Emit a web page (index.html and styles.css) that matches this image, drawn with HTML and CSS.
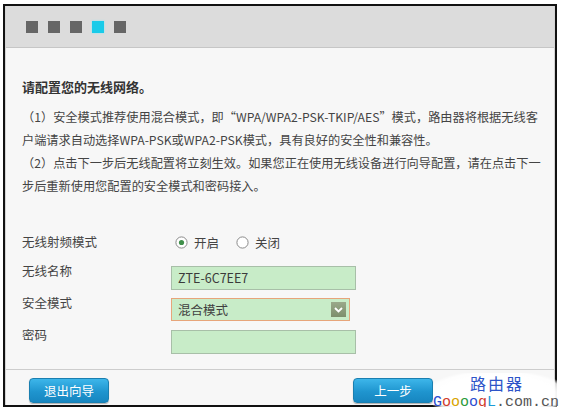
FILE: index.html
```html
<!DOCTYPE html>
<html lang="zh-CN">
<head>
<meta charset="utf-8">
<title>无线网络配置</title>
<link rel="stylesheet" href="styles.css">
</head>
<body>
<div class="frame">
  <div class="panel">
    <div class="steps">
      <span class="step"></span>
      <span class="step"></span>
      <span class="step"></span>
      <span class="step active"></span>
      <span class="step"></span>
    </div>
    <div class="content">
      <h1 class="title">请配置您的无线网络。</h1>
      <p class="desc">（1）安全模式推荐使用混合模式，即“WPA/WPA2-PSK-TKIP/AES”模式，路由器将根据无线客<br>户端请求自动选择WPA-PSK或WPA2-PSK模式，具有良好的安全性和兼容性。<br>（2）点击下一步后无线配置将立刻生效。如果您正在使用无线设备进行向导配置，请在点击下一<br>步后重新使用您配置的安全模式和密码接入。</p>
      <div class="form">
        <div class="row radio-row">
          <span class="label">无线射频模式</span>
          <div class="radios">
            <span class="radio">
              <svg width="13" height="13" viewBox="0 0 13 13"><circle cx="6.5" cy="6.5" r="5.6" fill="#fff" stroke="#8a8a8a" stroke-width="1"/><circle cx="6.5" cy="6.5" r="2.6" fill="#3f8f4a"/></svg>
              开启
            </span>
            <span class="radio">
              <svg width="13" height="13" viewBox="0 0 13 13"><circle cx="6.5" cy="6.5" r="5.6" fill="#fff" stroke="#8a8a8a" stroke-width="1"/></svg>
              关闭
            </span>
          </div>
        </div>
        <div class="row">
          <span class="label">无线名称</span>
          <div class="field">ZTE-6C7EE7</div>
        </div>
        <div class="row">
          <span class="label">安全模式</span>
          <div class="field select">混合模式
            <span class="arrow"><svg width="9" height="6" viewBox="0 0 9 6"><path d="M1 1 L4.5 4.5 L8 1" fill="none" stroke="#fff" stroke-width="1.8"/></svg></span>
          </div>
        </div>
        <div class="row">
          <span class="label">密码</span>
          <div class="field"></div>
        </div>
      </div>
    </div>
    <div class="footer">
      <button class="btn">退出向导</button>
      <button class="btn">上一步</button>
    </div>
  </div>
  <div class="watermark">
    <span class="wm-top">路由器</span>
    <span class="wm-bottom"><span class="c1">G</span><span class="c2">o</span><span class="c3">o</span><span class="c4">o</span><span class="c1">o</span><span class="c2">g</span><span class="c5">L</span><span class="c6">.com.cn</span></span>
  </div>
</div>
</body>
</html>
```
FILE: styles.css
```css
html, body {
  margin: 0;
  padding: 0;
  background: #fff;
}
body {
  font-family: "Noto Sans CJK SC", "Noto Sans", sans-serif;
  color: #3c3c3c;
}
.frame {
  position: relative;
  margin: 4px 0 0 3px;
  width: 550px;
  border: 2px solid #111;
}
.panel {
  background: #f7f7f7;
  border-left: 1px solid #d4d4d4;
  border-right: 1px solid #d4d4d4;
}
.steps {
  height: 41px;
  background: #dcdcdc;
  border-bottom: 1px solid #c6c6c6;
  display: flex;
  align-items: center;
  gap: 10px;
  padding-left: 20px;
}
.step {
  width: 12px;
  height: 12px;
  background: #666;
}
.step.active {
  background: #19cbe9;
  box-shadow: 0 0 2px #8ee9f7;
}
.content {
  height: 322px;
  padding: 0 0 0 16px;
  box-sizing: border-box;
  border-bottom: 1px solid #cdcdcd;
}
.title {
  margin: 0;
  padding-top: 30px;
  font-size: 13px;
  font-weight: bold;
  line-height: 18px;
  color: #333;
}
.desc {
  margin: 10px 0 0;
  font-size: 12.2px;
  line-height: 23px;
  color: #444;
  white-space: nowrap;
}
.form {
  margin-top: 34px;
  display: flex;
  flex-direction: column;
  gap: 8px;
}
.row {
  display: flex;
  align-items: flex-start;
  height: 24px;
  font-size: 12.5px;
}
.radio-row {
  align-items: center;
  height: 20px;
  margin-bottom: 6px;
}
.label {
  width: 149px;
  line-height: 16px;
  color: #444;
  margin-top: -3px;
}
.radio-row .label {
  margin-top: 0;
}
.radios {
  display: flex;
  gap: 17px;
  padding-left: 4px;
}
.radio {
  display: flex;
  align-items: center;
  gap: 6px;
  color: #444;
}
.field {
  width: 171px;
  height: 22px;
  background: #c8ecc8;
  border: 1px solid #a8bfa8;
  line-height: 22px;
  padding: 0 6px;
  font-size: 12.5px;
  color: #3a3a3a;
}
.field.select {
  width: 161px;
  height: 21px;
  line-height: 21px;
  border-color: #e7a57a;
  padding-right: 10px;
  color: #404040;
  display: flex;
  align-items: center;
  justify-content: space-between;
}
.arrow {
  width: 15px;
  height: 15px;
  background: linear-gradient(#9aa88a, #7d8f6c);
  display: flex;
  align-items: center;
  justify-content: center;
  margin-right: -7px;
}
.footer {
  height: 33px;
  display: flex;
  justify-content: space-between;
  align-items: flex-end;
  padding: 0 121px 2px 23px;
}
.btn {
  width: 80px;
  height: 25px;
  border: 1px solid #1a7fb0;
  border-radius: 4px;
  background: linear-gradient(#3db6ea, #1f95cf 55%, #1786c0);
  color: #fff;
  font-family: "Noto Sans CJK SC", sans-serif;
  font-size: 12.5px;
  padding: 0;
  box-shadow: 0 1px 1px rgba(0,0,0,0.3);
}
.watermark {
  position: absolute;
  right: -6px;
  bottom: -10px;
  width: 128px;
  height: 42px;
  background: radial-gradient(ellipse at 50% 50%, #fff 62%, rgba(255,255,255,0.85) 74%, rgba(255,255,255,0) 82%);
  display: flex;
  flex-direction: column;
  align-items: center;
}
.wm-top {
  font-family: "Noto Sans CJK SC", sans-serif;
  font-size: 16px;
  line-height: 20px;
  color: #2d54c8;
  letter-spacing: 2px;
}
.wm-bottom {
  font-family: "Liberation Mono", monospace;
  font-size: 15px;
  line-height: 17px;
  margin-top: 1px;
  align-self: flex-start;
}
.c1 { color: #2a4cd0; }
.c2 { color: #d03a2a; }
.c3 { color: #d8a400; }
.c4 { color: #2a9a3a; }
.c5 { color: #1b9ad6; }
.c6 { color: #555; }
```
